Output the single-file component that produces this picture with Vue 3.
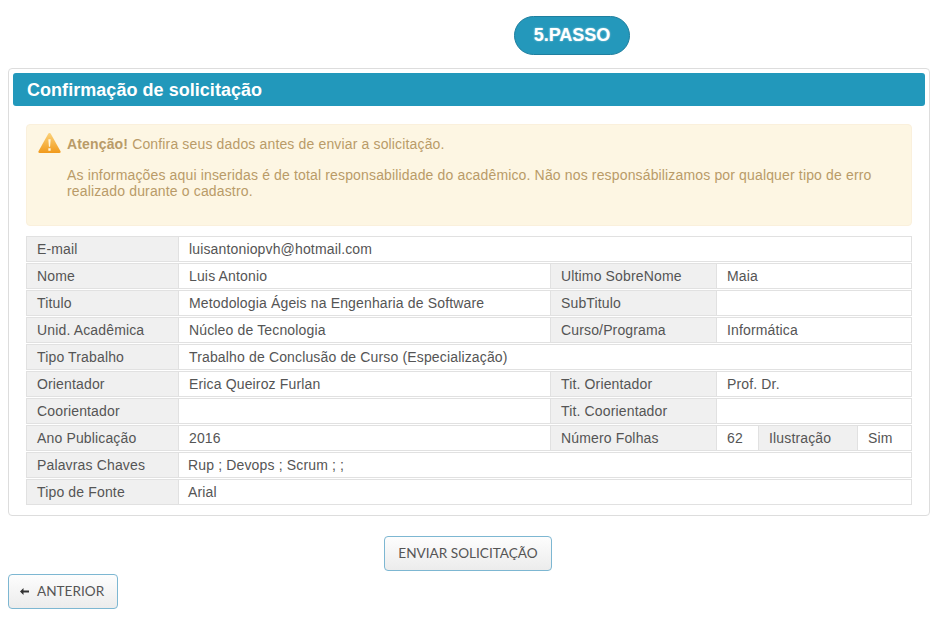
<template>
  <div class="page">
    <div class="step-row">
      <span class="step">5.PASSO</span>
    </div>

    <section class="panel">
      <h2 class="panel-title">Confirmação de solicitação</h2>

      <div class="alert">
        <svg class="alert-icon" width="23" height="22" viewBox="0 0 24 22">
          <defs>
            <linearGradient id="warn" x1="0" y1="0" x2="0" y2="1">
              <stop offset="0" stop-color="#fbd27a" />
              <stop offset="1" stop-color="#f19a1c" />
            </linearGradient>
          </defs>
          <path d="M12 .5c.6 0 1 .3 1.3.8l10.2 18.400c.4.8-.1 1.800-1.100 1.800H1.600c-1 0-1.500-1-1.100-1.800L10.700 1.300C11 .8 11.400.5 12 .5z" fill="url(#warn)" />
          <path d="M10.800 7h2.400l-.6 8h-1.200zM10.800 16.500h2.400v2.500h-2.400z" fill="#fff6df" />
        </svg>
        <p class="alert-line"><strong>Atenção!</strong> Confira seus dados antes de enviar a solicitação.</p>
        <p class="alert-text">As informações aqui inseridas é de total responsabilidade do acadêmico. Não nos responsábilizamos por qualquer tipo de erro realizado durante o cadastro.</p>
      </div>

      <table class="data">
        <colgroup>
          <col v-for="w in colWidths" :key="w.id" :style="{ width: w.px + 'px' }" />
        </colgroup>
        <tbody>
          <tr v-for="(row, i) in rows" :key="i">
            <td
              v-for="(cell, j) in row"
              :key="j"
              :colspan="cell.span || 1"
              :class="{ label: cell.label, tight: cell.tight }"
            >{{ cell.text }}</td>
          </tr>
        </tbody>
      </table>
    </section>

    <div class="send-row">
      <button class="btn send">ENVIAR SOLICITAÇÃO</button>
    </div>
    <button class="btn back">
      <svg class="arrow" width="9" height="7" viewBox="0 0 9 7">
        <path d="M0 3.500 3.500 0v2.500H9v2H3.500V7z" fill="#333" />
      </svg>
      ANTERIOR
    </button>
  </div>
</template>

<script setup>
const colWidths = [
  { id: 'a', px: 153 },
  { id: 'b', px: 372 },
  { id: 'c', px: 166 },
  { id: 'd', px: 42 },
  { id: 'e', px: 99 },
  { id: 'f', px: 54 }
]

const l = (text) => ({ text, label: true })
const v = (text, span = 1, tight = false) => ({ text, span, tight })

const rows = [
  [l('E-mail'), v('luisantoniopvh@hotmail.com', 5)],
  [l('Nome'), v('Luis Antonio'), l('Ultimo SobreNome'), v('Maia', 3)],
  [l('Titulo'), v('Metodologia Ágeis na Engenharia de Software'), l('SubTitulo'), v('', 3)],
  [l('Unid. Acadêmica'), v('Núcleo de Tecnologia'), l('Curso/Programa'), v('Informática', 3)],
  [l('Tipo Trabalho'), v('Trabalho de Conclusão de Curso (Especialização)', 5)],
  [l('Orientador'), v('Erica Queiroz Furlan'), l('Tit. Orientador'), v('Prof. Dr.', 3)],
  [l('Coorientador'), v(''), l('Tit. Coorientador'), v('', 3)],
  [l('Ano Publicação'), v('2016'), l('Número Folhas'), v('62'), l('Ilustração'), v('Sim')],
  [l('Palavras Chaves'), v('Rup ; Devops ; Scrum ; ;', 5, true)],
  [l('Tipo de Fonte'), v('Arial', 5, true)]
]
</script>

<style>
html, body {
  background: #fff;
}
</style>

<style scoped>
.page {
  width: 936px;
  height: 619px;
  box-sizing: border-box;
  padding: 16px 6px 0 8px;
  font-family: "Liberation Sans", Arial, sans-serif;
  font-size: 14px;
  color: #555;
  overflow: hidden;
}

.step-row {
  display: flex;
  padding-left: 506px;
  height: 52px;
}

.step {
  width: 116px;
  height: 39px;
  box-sizing: border-box;
  border-radius: 20px;
  border: 1px solid #1f7f9f;
  background: #2498bb;
  color: #fff;
  font-weight: bold;
  font-size: 18px;
  line-height: 37px;
  text-align: center;
  text-shadow: 0 0 2px rgba(255, 255, 255, .6);
}

.panel {
  width: 922px;
  height: 448px;
  box-sizing: border-box;
  border: 1px solid #dddddd;
  border-radius: 4px;
  padding: 4px;
}

.panel-title {
  margin: 0;
  height: 33px;
  padding-left: 14px;
  border-radius: 3px;
  background: #2298bb;
  color: #fff;
  font-size: 18px;
  font-weight: bold;
  letter-spacing: .04px;
  line-height: 35px;
}

.alert {
  position: relative;
  width: 886px;
  height: 102px;
  box-sizing: border-box;
  margin: 18px 0 10px 13px;
  padding: 11px 30px 0 40px;
  background: #fdf6e3;
  border: 1px solid #faf0dc;
  border-radius: 4px;
  color: #b99b68;
  line-height: 16px;
  letter-spacing: .15px;
}

.alert-icon {
  position: absolute;
  left: 11px;
  top: 7px;
}

.alert-line,
.alert-text {
  margin: 0;
}

.alert-text {
  margin-top: 15px;
}

.data {
  width: 886px;
  margin-left: 13px;
  table-layout: fixed;
  border-collapse: separate;
  border-spacing: 0 1px;
  margin-top: -1px;
}

.data td {
  height: 26px;
  box-sizing: border-box;
  padding: 0 10px;
  border: 1px solid #e1e1e1;
  border-left-width: 0;
  font-size: 14px;
  letter-spacing: .15px;
  color: #555;
  white-space: nowrap;
  overflow: hidden;
}

.data td:first-child {
  border-left-width: 1px;
}

.data td.label {
  background: #f0f0f0;
}

.data td.tight {
  padding-left: 9px;
}

.send-row {
  display: flex;
  justify-content: center;
  margin-top: 20px;
  padding-right: 2px;
}

.btn {
  box-sizing: border-box;
  height: 35px;
  border: 1px solid #7db7d2;
  border-radius: 4px;
  background: linear-gradient(#fdfdfd, #ececec);
  color: #555;
  font-family: Lato, "Liberation Sans", sans-serif;
  font-size: 13.6px;
  padding: 0 0 2px;
}

.send {
  width: 168px;
}

.back {
  display: flex;
  align-items: center;
  width: 110px;
  margin-top: 3px;
  padding-left: 11px;
}

.arrow {
  margin-right: 8px;
  margin-top: 2px;
}
</style>
